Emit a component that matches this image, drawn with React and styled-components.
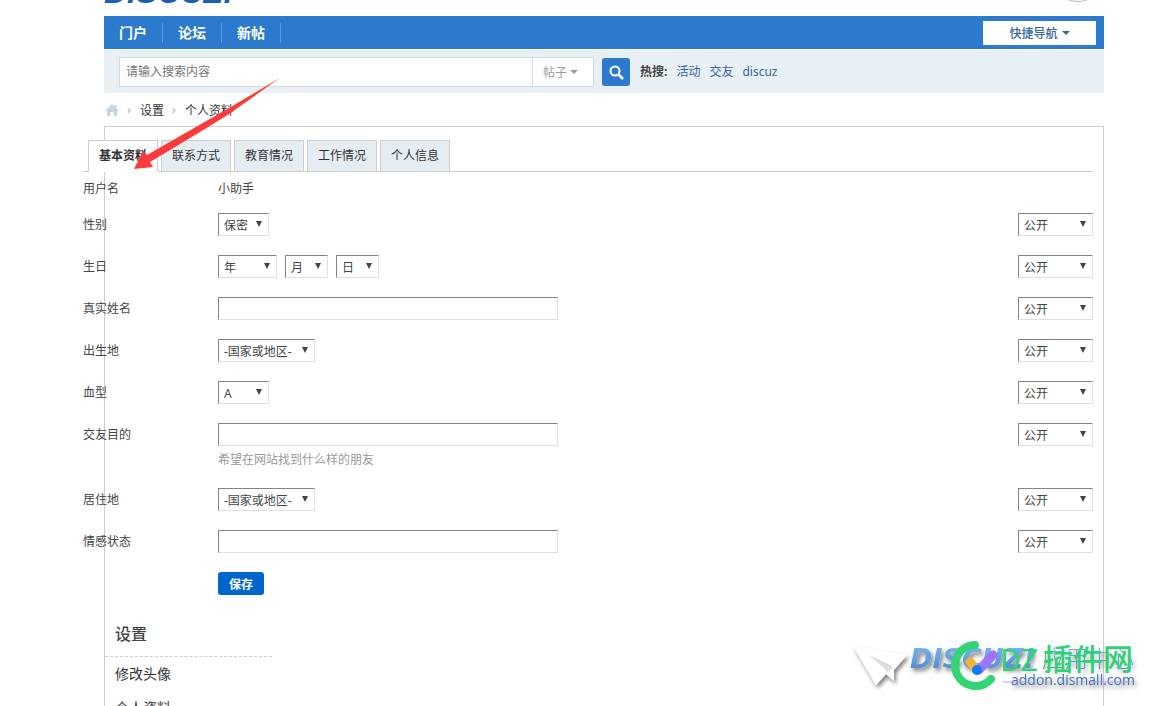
import { styled, createGlobalStyle } from "styled-components";

const GlobalStyle = createGlobalStyle`
    * {
        box-sizing: border-box;
    }
    body {
        margin: 0;
        overflow: hidden;
        background-color: #fff;
        color: #444;
        font-family: "Noto Sans", "Noto Sans CJK SC", sans-serif;
        font-size: 12px;
    }
    a {
        color: #333;
        text-decoration: none;
    }
    ul, h2 {
        margin: 0;
        padding: 0;
        list-style: none;
    }
    input, select, button {
        font-family: inherit;
        font-size: 12px;
    }
`
const Page = styled.div`
    position: relative;
    padding: 0 46px 0 104px;
`
const Header = styled.header`
    display: flex;
    justify-content: space-between;
    align-items: flex-end;
    height: 16px;
`
const Logo = styled.a`
    padding-bottom: 8px;
    color: #1a5fb0;
    font-family: "Liberation Sans", sans-serif;
    font-size: 32px;
    font-weight: bold;
    font-style: italic;
    line-height: 32px;
`
const Avatar = styled.div`
    width: 52px;
    height: 52px;
    margin-bottom: 14px;
    border: 1px solid #bbb;
    border-radius: 50%;
`
const NavBar = styled.nav`
    display: flex;
    justify-content: space-between;
    align-items: center;
    height: 33px;
    padding-right: 8px;
    background-color: #2b7acd;
`
const NavList = styled.ul`
    display: flex;
`
const NavLink = styled.a`
    display: block;
    padding: 0 15px;
    border-right: 1px solid #5a9be0;
    color: #fff;
    font-size: 14px;
    font-weight: bold;
    line-height: 20px;
`
const QuickBtn = styled.button`
    display: flex;
    justify-content: center;
    align-items: center;
    gap: 4px;
    width: 113px;
    height: 24px;
    padding: 0;
    border: none;
    background-color: #fff;
    color: #336699;
    font-weight: 500;
`
const Caret = styled.span`
    border-top: 4px solid currentColor;
    border-left: 4px solid transparent;
    border-right: 4px solid transparent;
`
const SearchBar = styled.form`
    display: flex;
    align-items: center;
    height: 43px;
    margin-top: 1px;
    padding: 0 15px;
    background-color: #e8eff5;
`
const SearchInput = styled.input`
    width: 413px;
    height: 30px;
    padding: 0 6px;
    border: 1px solid #cfdde3;
    border-right: none;
    background-color: #fff;
    color: #444;
    outline: none;
    &::placeholder {
        color: #757575;
    }
`
const SearchType = styled.button`
    display: flex;
    align-items: center;
    gap: 3px;
    width: 62px;
    height: 30px;
    padding: 0 10px;
    border: 1px solid #cfdde3;
    background-color: #fff;
    color: #999;
`
const SearchBtn = styled.button`
    display: flex;
    justify-content: center;
    align-items: center;
    width: 28px;
    height: 28px;
    margin: 0 10px 0 8px;
    padding: 0;
    border: none;
    border-radius: 3px;
    background-color: #2b7acd;
`
const HotWords = styled.div`
    display: flex;
    gap: 9px;
    line-height: 20px;
    a {
        color: #336699;
    }
`
const Crumbs = styled.div`
    display: flex;
    align-items: center;
    gap: 8px;
    height: 33px;
    padding-left: 1px;
`
const Separator = styled.span`
    width: 5px;
    color: #aaa;
`
const Panel = styled.div`
    padding-top: 13px;
    border: 1px solid #cdcdcd;
`
// the form hangs out over the left border of the panel
const Main = styled.main`
    margin: 0 10px 0 -22px;
`
const TabList = styled.ul`
    display: flex;
    gap: 3px;
    height: 32px;
    padding-left: 5px;
    border-bottom: 1px solid #cdcdcd;
`
const Tab = styled.a`
    display: block;
    width: 70px;
    height: 32px;
    border: 1px solid #cdcdcd;
    border-bottom-color: ${props => props.$active ? "#fff" : "#cdcdcd"};
    background-color: ${props => props.$active ? "#fff" : "#e5edf2"};
    font-weight: ${props => props.$active ? "bold" : "normal"};
    line-height: 30px;
    text-align: center;
`
const NameRow = styled.div`
    display: grid;
    grid-template-columns: 135px 1fr;
    align-items: center;
    height: 32px;
`
const Row = styled.div`
    display: grid;
    grid-template-columns: 135px 1fr 75px;
    align-items: start;
    padding: 9px 0 10px;
`
const Label = styled.label`
    line-height: 23px;
`
const Controls = styled.div`
    display: flex;
    gap: 8px;
`
const SelectBox = styled.span`
    position: relative;
    display: block;
    width: ${props => props.$width}px;
    height: 23px;
    &::after {
        content: "";
        position: absolute;
        top: 8px;
        right: 7px;
        border-top: 6px solid #444;
        border-left: 3px solid transparent;
        border-right: 3px solid transparent;
        pointer-events: none;
    }
`
const Select = styled.select`
    width: 100%;
    height: 23px;
    padding: 1px 5px 0;
    border: 1px solid;
    border-color: #848484 #e0e0e0 #e0e0e0 #848484;
    border-radius: 0;
    appearance: none;
    background-color: #fff;
    color: #444;
`
const TextInput = styled.input`
    width: 340px;
    height: 23px;
    padding: 2px 4px;
    border: 1px solid;
    border-color: #848484 #e0e0e0 #e0e0e0 #848484;
    background-color: #fff;
`
const Hint = styled.p`
    margin: 3px 0 0;
    color: #999;
    line-height: 22px;
    height: 20px;
`
const SaveBtn = styled.button`
    width: 46px;
    height: 23px;
    padding: 0;
    border: none;
    border-radius: 3px;
    background-color: #0066cc;
    color: #fff;
    font-weight: bold;
`
const SideMenu = styled.aside`
    width: 167px;
    padding-top: 7px;
`
const SideTitle = styled.h2`
    padding-left: 10px;
    border-bottom: 1px dashed #cdcdcd;
    font-size: 16px;
    font-weight: 500;
    line-height: 44px;
`
const SideLink = styled.a`
    display: block;
    padding-left: 10px;
    font-size: 14px;
    line-height: 34px;
`
const RedArrow = styled.svg`
    position: absolute;
    top: 72px;
    left: 125px;
    pointer-events: none;
`
const Watermark = styled.svg`
    position: absolute;
    top: 635px;
    right: 0;
    pointer-events: none;
`

const navItems = ["门户", "论坛", "新帖"];
const hotWords = ["活动", "交友", "discuz"];
const tabs = ["基本资料", "联系方式", "教育情况", "工作情况", "个人信息"];
const sideItems = ["修改头像", "个人资料"];

const fields = [
    { id: "gender", label: "性别", selects: [{ text: "保密", width: 51 }] },
    {
        id: "birth", label: "生日", selects: [
            { text: "年", width: 59 },
            { text: "月", width: 43 },
            { text: "日", width: 43 },
        ]
    },
    { id: "realname", label: "真实姓名" },
    { id: "birthcity", label: "出生地", selects: [{ text: "-国家或地区-", width: 97 }] },
    { id: "blood", label: "血型", selects: [{ text: "A", width: 51 }] },
    { id: "purpose", label: "交友目的", hint: "希望在网站找到什么样的朋友" },
    { id: "residecity", label: "居住地", selects: [{ text: "-国家或地区-", width: 97 }] },
    { id: "affective", label: "情感状态" },
];

const DropDown = ({ id, name, text, width }) => {
    return(
        <SelectBox $width={width}>
            <Select id={id} aria-label={name}>
                <option>{text}</option>
            </Select>
        </SelectBox>
    )
}

const Field = ({ field }) => {
    return(
        <Row>
            <Label htmlFor={field.id}>{field.label}</Label>
            <div>
                <Controls>
                    {field.selects
                        ? field.selects.map((item, i) => (
                            <DropDown key={item.text} id={i === 0 ? field.id : undefined} name={item.text} text={item.text} width={item.width} />
                        ))
                        : <TextInput id={field.id} type="text" />}
                </Controls>
                {field.hint && <Hint>{field.hint}</Hint>}
            </div>
            <DropDown name={field.label + "公开"} text="公开" width={75} />
        </Row>
    )
}

const AddonMark = () => {
    return(
        <Watermark width="300" height="71" viewBox="0 0 300 71">
            <defs>
                <linearGradient id="sky" x1="0" y1="0" x2="0" y2="1">
                    <stop offset="0" stopColor="#7db8f2" />
                    <stop offset="1" stopColor="#4a86cb" />
                </linearGradient>
                <filter id="drop" x="-20%" y="-20%" width="150%" height="160%">
                    <feDropShadow dx="2" dy="3" stdDeviation="2" floodColor="#000" floodOpacity="0.5" />
                </filter>
            </defs>
            <g filter="url(#drop)">
                <path d="M3 11 L57 20 L44 35 L44 46 L36 39 L26 50 Z" fill="#fff" />
                <path d="M20 21 L43 32 L34 29 Z" fill="#666" />
                <path d="M20 21 L31 26 L43 32 L36 38 Z" fill="#ddd" />
                <path d="M20 21 L37 36 L26 50 Z" fill="#fff" />
            </g>
            <g filter="url(#drop)" fill="url(#sky)">
                <text x="60" y="33" fontFamily="DejaVu Sans" fontSize="27" fontWeight="bold" fontStyle="italic">DISCUZ!</text>
                <text x="192" y="32" fontFamily="Noto Sans CJK SC" fontSize="23" fontWeight="300">应用中心</text>
                <text x="161" y="50" fontFamily="Open Sans" fontSize="14" fill="#3d70a8">addon.dismall.com</text>
            </g>
            <path d="M153 47 H180 M240 47 H280" stroke="#b79bff" />
            <path d="M125 10 A20.500 20.500 0 1 0 141 44" fill="none" stroke="#32d573" strokeWidth="8" strokeLinecap="round" />
            <path d="M120 27 L127 35" stroke="#f6b137" strokeWidth="9" strokeLinecap="round" />
            <path d="M143 20 L129 35" stroke="#9d74fb" strokeWidth="9" strokeLinecap="round" />
            <circle cx="127" cy="35" r="5" fill="#0d7dfb" />
            <g fill="#2ed372" fontFamily="Noto Sans CJK SC">
                <text x="150" y="36" fontSize="30">DZ</text>
                <text x="193" y="35" fontSize="30" fontWeight="500">插件网</text>
            </g>
        </Watermark>
    )
}

const App = () => {
    return(
        <>
            <GlobalStyle />
            <Page>
                <Header>
                    <Logo href="#">DISCUZ!</Logo>
                    <Avatar />
                </Header>
                <NavBar>
                    <NavList>
                        {navItems.map(item => <li key={item}><NavLink href="#">{item}</NavLink></li>)}
                    </NavList>
                    <QuickBtn type="button">快捷导航<Caret /></QuickBtn>
                </NavBar>
                <SearchBar>
                    <SearchInput type="text" placeholder="请输入搜索内容" aria-label="搜索" />
                    <SearchType type="button">帖子<Caret /></SearchType>
                    <SearchBtn type="button" aria-label="搜索">
                        <svg width="16" height="16" viewBox="0 0 16 16" fill="none" stroke="#fff">
                            <circle cx="7" cy="7" r="4.500" strokeWidth="2" />
                            <path d="M10.500 10.500 L15 15" strokeWidth="2.500" />
                        </svg>
                    </SearchBtn>
                    <HotWords>
                        <strong>热搜:</strong>
                        {hotWords.map(word => <a key={word} href="#">{word}</a>)}
                    </HotWords>
                </SearchBar>
                <Crumbs>
                    <a href="#" aria-label="首页">
                        <svg width="14" height="12" viewBox="0 0 14 12" fill="#c3d7e3" display="block">
                            <path d="M7 0 L9.500 2.400 V1 H11.500 V4.300 L14 6.800 H12 V12 H8.500 V8 H5.500 V12 H2 V6.800 H0 Z" />
                        </svg>
                    </a>
                    <Separator>›</Separator>
                    <a href="#">设置</a>
                    <Separator>›</Separator>
                    <a href="#">个人资料</a>
                </Crumbs>
                <Panel>
                    <Main>
                        <TabList>
                            {tabs.map((tab, i) => <li key={tab}><Tab href="#" $active={i === 0}>{tab}</Tab></li>)}
                        </TabList>
                        <NameRow>
                            <span>用户名</span>
                            <span>小助手</span>
                        </NameRow>
                        {fields.map(field => <Field key={field.id} field={field} />)}
                        <Row>
                            <span />
                            <div>
                                <SaveBtn type="button">保存</SaveBtn>
                            </div>
                        </Row>
                    </Main>
                    <SideMenu>
                        <SideTitle>设置</SideTitle>
                        {sideItems.map(item => <SideLink key={item} href="#">{item}</SideLink>)}
                    </SideMenu>
                </Panel>
                <RedArrow width="165" height="105" viewBox="0 0 165 105">
                    <path d="M155 6 L104 36 L22 83 L18 79 L9 97 L28 95 L25 90 L80 57 L104 42 Z" fill="#fb3b3b" />
                </RedArrow>
                <AddonMark />
            </Page>
        </>
    )
}

export default App;
